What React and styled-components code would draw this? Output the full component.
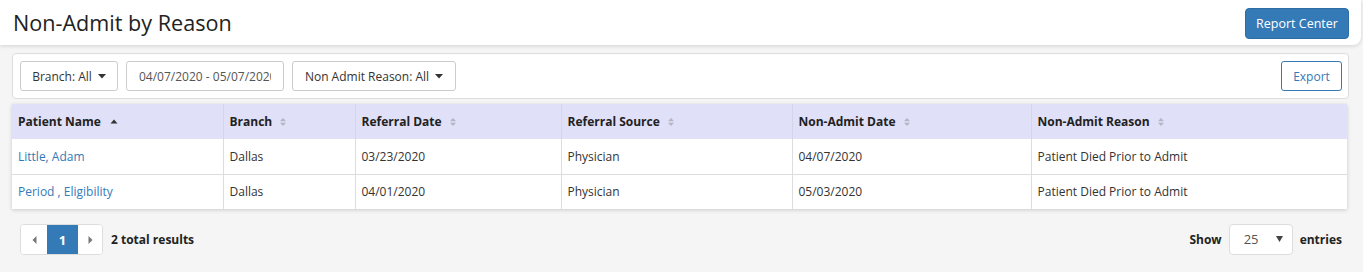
import React from 'react'
import styled, { createGlobalStyle } from 'styled-components'

const Global = createGlobalStyle`
body{
  margin: 0;
  background: #f5f5f5;
  font-family: "Open Sans", "Liberation Sans", sans-serif;
  color: #333;
}
*{ box-sizing: border-box; }
`

const rows = [
  { name: 'Little, Adam', branch: 'Dallas', referral: '03/23/2020', source: 'Physician', nonAdmit: '04/07/2020', reason: 'Patient Died Prior to Admit' },
  { name: 'Period , Eligibility', branch: 'Dallas', referral: '04/01/2020', source: 'Physician', nonAdmit: '05/03/2020', reason: 'Patient Died Prior to Admit' },
]

const columns = [
  { label: 'Patient Name', width: 211, sort: 'asc' },
  { label: 'Branch', width: 132 },
  { label: 'Referral Date', width: 206 },
  { label: 'Referral Source', width: 231 },
  { label: 'Non-Admit Date', width: 239 },
  { label: 'Non-Admit Reason' },
]

function SortIcon({ dir }) {
  if (dir === 'asc') {
    return (
      <svg width="8" height="10" viewBox="0 0 8 10" style={{ marginLeft: 9 }}>
        <path d="M0.5 6.5 L4 2.5 L7.5 6.5 Z" fill="#333" />
      </svg>
    )
  }
  return (
    <svg width="8" height="10" viewBox="0 0 8 10" style={{ marginLeft: 7 }}>
      <path d="M1 4.2 L4 1 L7 4.2 Z" fill="#b4b4c4" />
      <path d="M1 5.8 L4 9 L7 5.8 Z" fill="#b4b4c4" />
    </svg>
  )
}

function Caret() {
  return (
    <svg width="8" height="5" viewBox="0 0 8 5" style={{ marginLeft: 6 }}>
      <path d="M0 0 L8 0 L4 4.5 Z" fill="#333" />
    </svg>
  )
}

function App() {
  return (
    <>
      <Global />
      <Page>
        <Header>
          <Title>Non-Admit by Reason</Title>
          <PrimaryButton>Report Center</PrimaryButton>
        </Header>
        <Content>
          <FilterBar>
            <Filters>
              <Dropdown width={98}>Branch: All<Caret /></Dropdown>
              <DateInput readOnly value="04/07/2020 - 05/07/2020" />
              <Dropdown width={164}>Non Admit Reason: All<Caret /></Dropdown>
            </Filters>
            <OutlineButton>Export</OutlineButton>
          </FilterBar>
          <TableCard>
            <Table>
              <thead>
                <tr>
                  {columns.map(c => (
                    <Th key={c.label} style={c.width ? { width: c.width } : undefined}>
                      <HeadInner>{c.label}<SortIcon dir={c.sort} /></HeadInner>
                    </Th>
                  ))}
                </tr>
              </thead>
              <tbody>
                {rows.map(r => (
                  <tr key={r.name}>
                    <Td><NameLink>{r.name}</NameLink></Td>
                    <Td>{r.branch}</Td>
                    <Td>{r.referral}</Td>
                    <Td>{r.source}</Td>
                    <Td>{r.nonAdmit}</Td>
                    <Td>{r.reason}</Td>
                  </tr>
                ))}
              </tbody>
            </Table>
          </TableCard>
          <Footer>
            <PagerGroup>
              <Pager>
                <PageBtn width={26}>
                  <svg width="5" height="8" viewBox="0 0 5 8"><path d="M4.5 0 L4.5 8 L0.5 4 Z" fill="#777" /></svg>
                </PageBtn>
                <PageBtn width={31} active>1</PageBtn>
                <PageBtn width={24}>
                  <svg width="5" height="8" viewBox="0 0 5 8"><path d="M0.5 0 L0.5 8 L4.5 4 Z" fill="#777" /></svg>
                </PageBtn>
              </Pager>
              <BoldText>2 total results</BoldText>
            </PagerGroup>
            <ShowGroup>
              <BoldText>Show</BoldText>
              <Select>
                <span>25</span>
                <svg width="7" height="6" viewBox="0 0 7 6"><path d="M0 0 L7 0 L3.5 6 Z" fill="#444" /></svg>
              </Select>
              <BoldText>entries</BoldText>
            </ShowGroup>
          </Footer>
        </Content>
      </Page>
    </>
  )
}

const Page = styled.div`
padding-right: 2px;
`
const Header = styled.div`
height: 45px;
background: #fff;
border-bottom-right-radius: 8px;
box-shadow: 0 1px 4px rgba(0,0,0,0.14);
display: flex;
align-items: center;
justify-content: space-between;
padding: 0 12px 0 13px;
`
const Title = styled.h1`
margin: 0;
font-size: 21.6px;
font-weight: 400;
color: #222;
`
const PrimaryButton = styled.button`
height: 31px;
width: 104px;
padding: 0;
background: #337ab7;
color: #fff;
border: 1px solid #2e6da4;
border-radius: 4px;
font-family: inherit;
font-size: 12.5px;
margin-top: 1px;
`
const Content = styled.div`
padding: 8px 12px 0 12px;
`
const FilterBar = styled.div`
height: 46px;
background: #fff;
border: 1px solid #ddd;
border-radius: 4px;
display: flex;
align-items: center;
justify-content: space-between;
padding: 0 6px 0 7px;
`
const Filters = styled.div`
display: flex;
gap: 8px;
`
const Dropdown = styled.div`
height: 30px;
width: ${p => p.width}px;
border: 1px solid #ccc;
border-radius: 3px;
display: flex;
align-items: center;
justify-content: center;
font-size: 12px;
color: #333;
background: #fff;
`
const DateInput = styled.input`
height: 30px;
width: 158px;
border: 1px solid #ccc;
border-radius: 3px;
padding: 0 12px;
font-family: inherit;
font-size: 12px;
color: #555;
outline: none;
`
const OutlineButton = styled.button`
height: 30px;
width: 61px;
background: #fff;
border: 1px solid #337ab7;
border-radius: 3px;
color: #337ab7;
font-family: inherit;
font-size: 12px;
`
const TableCard = styled.div`
margin-top: 5px;
margin-right: 2px;
background: #fff;
box-shadow: 0 1px 4px rgba(0,0,0,0.18);
`
const Table = styled.table`
width: 100%;
border-collapse: collapse;
table-layout: fixed;
font-size: 12px;
`
const Th = styled.th`
height: 35px;
background: #e0e0f8;
text-align: left;
padding: 0 6px;
font-weight: 700;
color: #222;
border-left: 1px solid #d4d4ea;
&:first-child{ border-left: none; }
`
const HeadInner = styled.div`
display: flex;
align-items: center;
`
const Td = styled.td`
height: 35px;
padding: 0 6px;
color: #333;
border-left: 1px solid #ddd;
border-top: 1px solid #ddd;
&:first-child{ border-left: none; }
tr:first-child > &{ border-top: none; }
`
const NameLink = styled.a`
color: #337ab7;
text-decoration: none;
cursor: pointer;
`
const Footer = styled.div`
display: flex;
justify-content: space-between;
align-items: center;
padding: 15px 7px 0 8px;
`
const PagerGroup = styled.div`
display: flex;
align-items: center;
gap: 8px;
`
const Pager = styled.div`
display: flex;
border: 1px solid #ddd;
border-radius: 4px;
overflow: hidden;
background: #fff;
`
const PageBtn = styled.div`
height: 29px;
width: ${p => p.width}px;
display: flex;
align-items: center;
justify-content: center;
background: ${p => (p.active ? '#337ab7' : '#fff')};
color: #fff;
font-size: 13px;
font-weight: 700;
`
const BoldText = styled.span`
font-size: 12px;
font-weight: 700;
color: #222;
`
const ShowGroup = styled.div`
display: flex;
align-items: center;
gap: 7px;
`
const Select = styled.div`
height: 31px;
width: 64px;
background: #fff;
border: 1px solid #ddd;
border-radius: 4px;
display: flex;
align-items: center;
justify-content: space-between;
padding: 0 9px 2px 14px;
font-size: 13px;
color: #555;
`

export default App
